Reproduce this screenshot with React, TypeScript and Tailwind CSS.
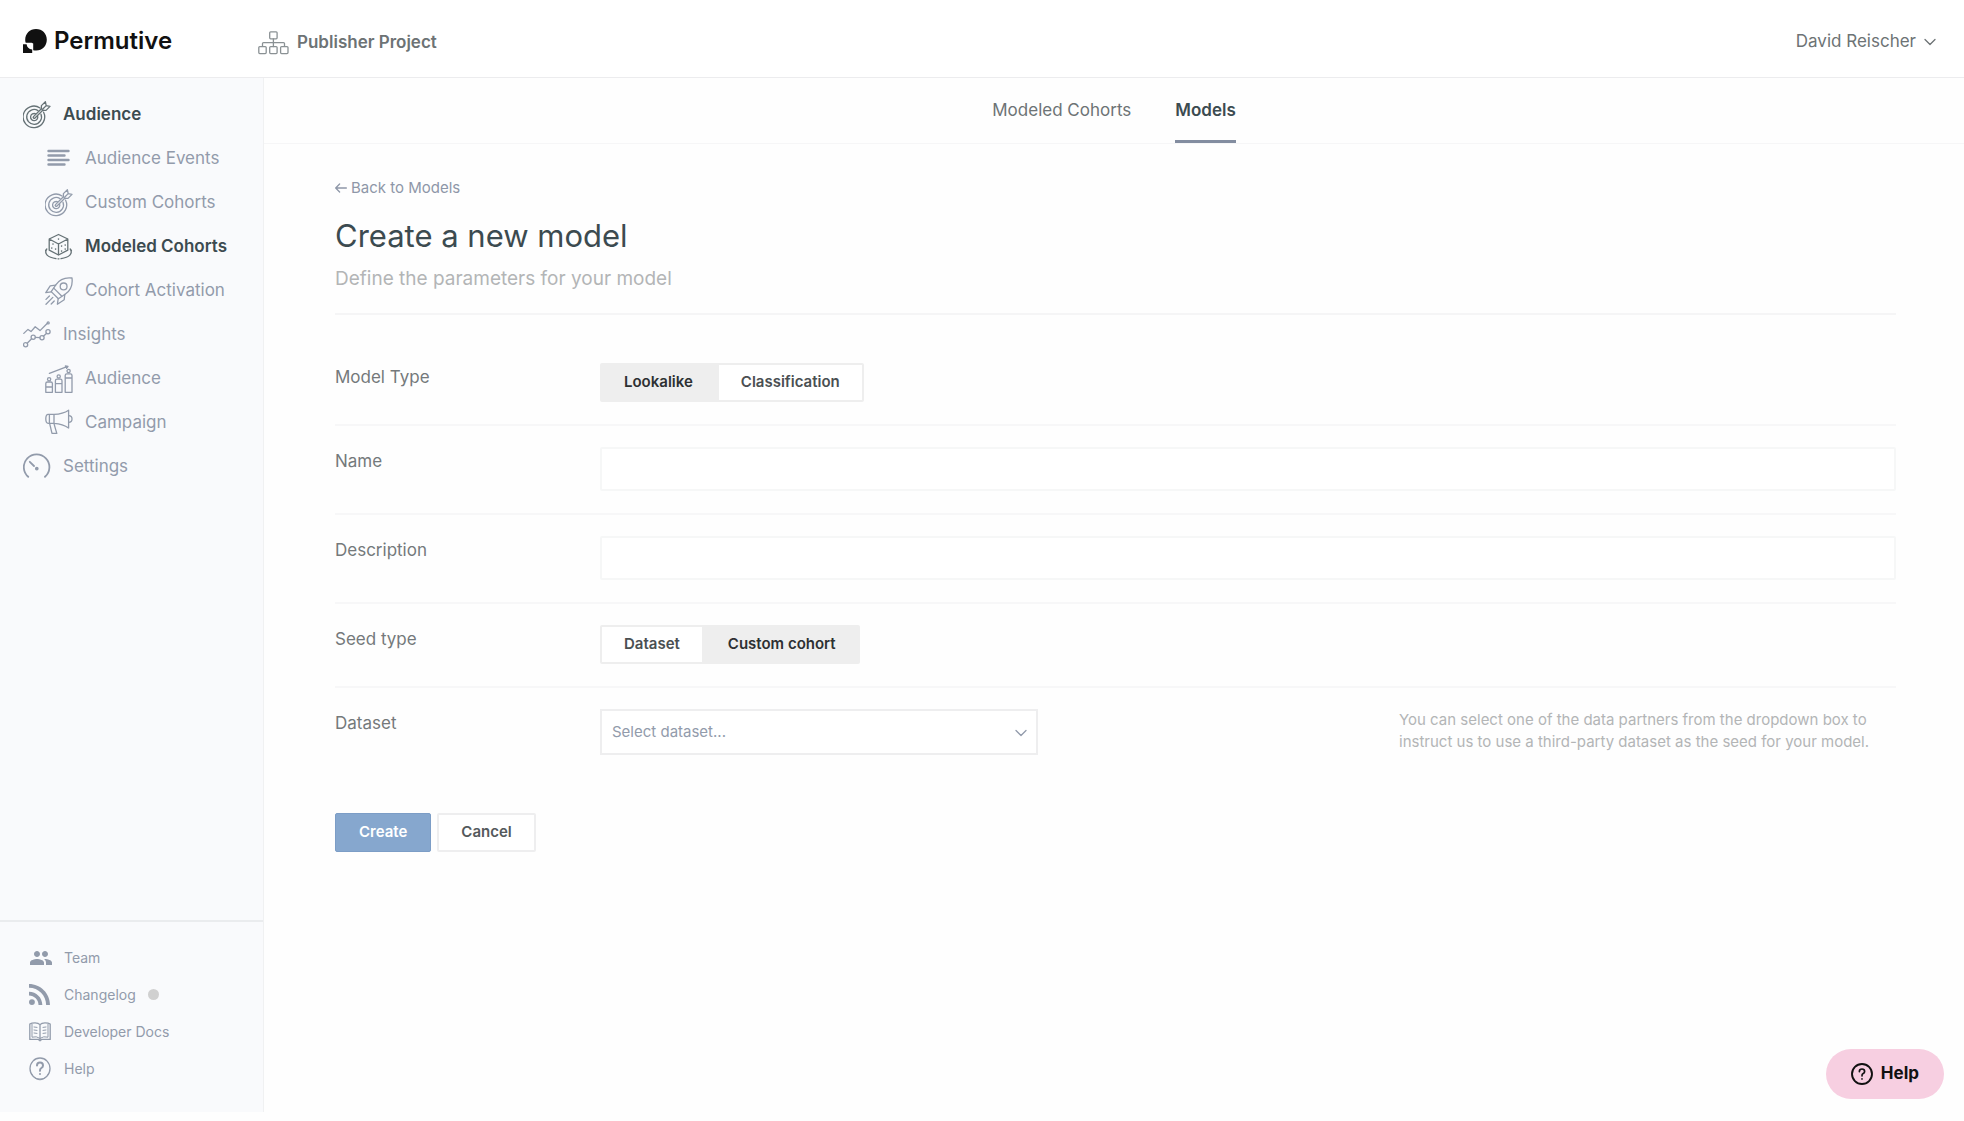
import React, { useState } from "react";
import { MdPeople } from "react-icons/md";

type IconProps = { className?: string; children: React.ReactNode; box?: string };

const Icon = ({ className = "h-7 w-7", box = "0 0 28 28", children }: IconProps) => (
  <svg
    viewBox={box}
    className={`shrink-0 ${className}`}
    fill="none"
    stroke="currentColor"
    strokeWidth="1.3"
    strokeLinecap="round"
    strokeLinejoin="round"
    aria-hidden="true"
  >
    {children}
  </svg>
);

const TargetIcon = () => (
  <Icon>
    <path d="M17 7A10.8 10.8 0 1 0 20.6 11.2" />
    <path d="M15 9.6A7.4 7.4 0 1 0 18 13.2" />
    <path d="M12.6 12.8A3.6 3.6 0 1 0 14.6 15" />
    <path d="M10.5 15.6L18.4 7.8M12 17L19.8 9.2M10.5 15.6a1 1 0 0 0 1.5 1.4" />
    <path d="M18.4 8V4.6L22.4 .8L23.2 4.6L27 5.4L23 9.4H19.4M19.6 8.2L23.2 4.6" />
  </Icon>
);

const LinesIcon = () => (
  <Icon>
    <path strokeWidth="2.4" d="M3.5 6h20M3.5 10.5h16M3.5 15h20M3.5 19.5h16" />
  </Icon>
);

const CubeIcon = () => (
  <Icon>
    <path d="M13.5 1.5L22.8 6v11.2L13.5 22L4.2 17.2V6zM4.2 6l9.3 5l9.3-5M13.5 11v11" />
    <path
      strokeWidth="1.6"
      d="M13.5 6v.1M8 11v.1M10.6 16v.1M6.8 15v.1M16.6 13v.1M20.2 12v.1M16.6 18v.1M20.2 16v.1"
    />
    <path d="M1.6 16.4C-1 20.5 2.5 24.6 11 25.6M25.4 16.4C28 20.5 24.5 24.6 16 25.6M.6 17.4l1.2-1.4M26.4 17.4l-1.2-1.4M13 25.8h1" />
  </Icon>
);

const RocketIcon = () => (
  <Icon>
    <path d="M27 1C20.5.2 14.4 2.6 11 7.6L6.2 14.6L13.4 21.8L20.4 17C25.4 13.6 27.8 7.5 27 1z" />
    <circle cx="18.6" cy="9.4" r="3.4" />
    <path d="M10.6 8.2L5.2 8.8L.8 15.6L6.4 14.8M9 11.4L16.6 19M19.8 17.4L19.2 22.8L12.4 27.2L13.2 21.6" />
    <path d="M4.4 19L1 22.4M7.8 20.4L1 27.2M9.2 24L6.2 27" />
  </Icon>
);

const TrendIcon = () => (
  <Icon>
    <path d="M.8 12.4L5 8.4L8 10.6L12.2 5.8L17 9.6L24.4 2.2" />
    <circle cx="25.2" cy="1.9" r="1" />
    <circle cx="2.6" cy="23.8" r="2.1" />
    <circle cx="10.2" cy="16.2" r="2.1" />
    <circle cx="19" cy="16.8" r="2.1" />
    <circle cx="25" cy="10.8" r="2.1" />
    <path d="M4.2 22.2l4.4-4.4M12.4 16.4l4.4.2M20.4 15.2l3-2.8" />
  </Icon>
);

const PeopleBarsIcon = () => (
  <Icon>
    <path d="M.8 27.3V18.6Q.8 17 2.4 17h3.4q1.6 0 1.6 1.6v8.7zM.8 22h6.6" />
    <path d="M10.4 27.3V15.8q0-1.6 1.6-1.6h3.4q1.6 0 1.6 1.6v11.5zM10.4 18.6H17" />
    <path d="M20.2 27.3V10.4q0-1.6 1.6-1.6h3.6q1.6 0 1.6 1.6v16.9zM20.2 13H27" />
    <circle cx="4.1" cy="14.2" r="1.6" />
    <circle cx="13.7" cy="11.4" r="1.6" />
    <circle cx="23.6" cy="6" r="1.6" />
    <path d="M4.4 8.4L22 1.6M20.4 1L23 1.4L21.6 3.4" />
  </Icon>
);

const MegaphoneIcon = () => (
  <Icon>
    <path d="M9 5.4H3.2Q.8 5.4.8 9.8T3.2 14.4H9zM4.4 5.4v9M9 5.4Q18 5 23.6 1.2V19Q18 15 9 14.4" />
    <path d="M23.6 6.6q3.4 0 3.4 3.4t-3.4 3.4M4.6 14.4L7 24.4h4.8L10.4 19.6L9 14.6" />
  </Icon>
);

const GaugeIcon = () => (
  <Icon>
    <path strokeWidth="1.8" d="M5.2 23.8A12.8 12.8 0 1 1 22 23.8M6.8 8.8l4.2 4.2" />
    <circle cx="13.8" cy="15.6" r="1.2" fill="currentColor" />
  </Icon>
);

const RssIcon = () => (
  <svg viewBox="4 4.4 15.6 15.6" className="h-[21px] w-[21px]" fill="currentColor" aria-hidden="true">
    <circle cx="6.18" cy="17.82" r="2.18" />
    <path d="M4 4.44v2.83c7.03 0 12.73 5.7 12.73 12.73h2.83c0-8.59-6.97-15.56-15.56-15.56zm0 5.66v2.83c3.9 0 7.07 3.17 7.07 7.07h2.83c0-5.47-4.43-9.9-9.9-9.9z" />
  </svg>
);

const BookIcon = () => (
  <Icon className="h-5 w-[22px]" box="0 0 22 20">
    <path d="M11 2.6Q9.4.8 6 .8T.8 2V17.4h8.6L11 18.8l1.6-1.4h8.6V2Q19.4.8 16 .8T11 2.6V18.4" />
    <path
      strokeWidth="1"
      d="M3 2.4v12.8q4.4-1.4 8 1.2q3.6-2.6 8-1.2V2.4M5 5l3 .4M5 8l3 .4M5 11l3 .4M14 5.4l3-.4M14 8.4l3-.4M14 11.4l3-.4"
    />
  </Icon>
);

const HelpOvalIcon = () => (
  <Icon className="h-6 w-[22px]" box="0 0 22 24">
    <ellipse cx="11" cy="11.6" rx="10" ry="10.6" />
    <path d="M2.6 17Q6 22.8 11 22.8T19.4 17" strokeWidth="1" />
    <path strokeWidth="2" d="M8 8.4Q8 5.6 11 5.6T14 8.4Q14 10 12.4 11T11 13.8M11 17v.1" />
  </Icon>
);

const SitemapIcon = () => (
  <Icon className="h-6 w-[31px] text-[#8a9194]" box="0 0 31 24">
    <rect x="11.7" y=".8" width="7.4" height="7" rx="1" />
    <rect x=".8" y="15.6" width="7.4" height="7" rx="1" />
    <rect x="11.7" y="15.6" width="7.4" height="7" rx="1" />
    <rect x="22.6" y="15.6" width="7.4" height="7" rx="1" />
    <path d="M15.4 7.8v7.8M4.5 15.4V12.6q0-1 1-1h20q1 0 1 1v2.8" />
  </Icon>
);

const LogoMark = () => (
  <svg viewBox="0 0 24 24" className="h-6 w-6" fill="#111111" aria-hidden="true">
    <path d="M13 0C19.4 0 23.8 4.6 23.8 10.8S19.2 21.6 13.2 21.6C12 21.6 11 21.5 10.2 21.2V14.4L8.6 13.8H2.7C2.3 12.8 2.2 11.8 2.2 10.8C2.2 4.6 6.8 0 13 0z" />
    <path d="M0 15.2h3.6Q4 19.6 9.2 20.6V24H0z" />
  </svg>
);

const Chevron = ({ className }: { className: string }) => (
  <Icon className={className} box="0 0 12 8">
    <path d="M1 1.5l5 5l5-5" />
  </Icon>
);

const navItems = [
  { label: "Audience", icon: <TargetIcon />, sub: false, active: true },
  { label: "Audience Events", icon: <LinesIcon />, sub: true, active: false },
  { label: "Custom Cohorts", icon: <TargetIcon />, sub: true, active: false },
  { label: "Modeled Cohorts", icon: <CubeIcon />, sub: true, active: true },
  { label: "Cohort Activation", icon: <RocketIcon />, sub: true, active: false },
  { label: "Insights", icon: <TrendIcon />, sub: false, active: false },
  { label: "Audience", icon: <PeopleBarsIcon />, sub: true, active: false },
  { label: "Campaign", icon: <MegaphoneIcon />, sub: true, active: false },
  { label: "Settings", icon: <GaugeIcon />, sub: false, active: false },
];

const footerItems = [
  { label: "Team", icon: <MdPeople className="h-6 w-6" />, dot: false },
  { label: "Changelog", icon: <RssIcon />, dot: true },
  { label: "Developer Docs", icon: <BookIcon />, dot: false },
  { label: "Help", icon: <HelpOvalIcon />, dot: false },
];

const Sidebar = () => (
  <aside className="flex w-[264px] shrink-0 flex-col border-r border-[#f0f1f2] bg-[#f9fafc] text-[#929bab]">
    <nav className="flex flex-col pt-[15px]">
      {navItems.map((item, i) => (
        <a
          key={i}
          href="#"
          className={`flex h-11 items-center gap-3 text-[17px] ${item.sub ? "pl-[45px]" : "pl-[23px]"} ${
            item.active ? "font-semibold text-[#3c4b50]" : ""
          }`}
        >
          <span className={`flex ${item.active ? "text-[#667276]" : ""}`}>{item.icon}</span>
          {item.label}
        </a>
      ))}
    </nav>

    <nav className="mt-auto border-t-2 border-[#eaecee] pt-[17px] pb-[25px] text-sm">
      {footerItems.map((item) => (
        <a key={item.label} href="#" className="flex h-[37px] items-center pl-7">
          <span className="flex w-9 items-center pl-px">{item.icon}</span>
          {item.label}
          {item.dot && <span className="ml-3 h-[11px] w-[11px] rounded-full bg-[#d0d0d0]" />}
        </a>
      ))}
    </nav>
  </aside>
);

type ToggleProps = {
  label: string;
  options: string[];
  value: string;
  onChange: (value: string) => void;
};

const Toggle = ({ label, options, value, onChange }: ToggleProps) => (
  <div role="group" aria-label={label} className="flex">
    {options.map((option) => (
      <button
        key={option}
        type="button"
        aria-pressed={option === value}
        onClick={() => onChange(option)}
        className={`h-[39px] border-2 border-[#eeeeee] px-[22px] text-[15px] font-semibold first:rounded-l-xs last:rounded-r-xs ${
          option === value ? "bg-[#eeeeee] text-[#2d3032]" : "bg-white text-[#4a4f52]"
        }`}
      >
        {option}
      </button>
    ))}
  </div>
);

type RowProps = { label: string; htmlFor?: string; first?: boolean; children: React.ReactNode };

const Row = ({ label, htmlFor, first, children }: RowProps) => (
  <div className={`flex items-start pb-[22px] ${first ? "pt-12" : "border-t-2 border-[#f7f7f8] pt-[21px]"}`}>
    <label htmlFor={htmlFor} className="w-[265px] shrink-0 text-[17px] leading-7 text-[#74797b]">
      {label}
    </label>
    {children}
  </div>
);

const inputStyle = "h-11 min-w-0 flex-1 rounded-xs border-2 border-[#f6f7f7] bg-white px-3 text-[15px] outline-none";

export default function App() {
  const [modelType, setModelType] = useState("Lookalike");
  const [seedType, setSeedType] = useState("Custom cohort");
  const [name, setName] = useState("");
  const [description, setDescription] = useState("");

  return (
    <div className="flex min-h-screen flex-col bg-[#fefefe] pb-[9px] font-['Inter','Liberation_Sans',sans-serif]">
      <header className="flex h-[78px] items-center border-b border-[#ececee] bg-white pt-1 pr-7 pl-[23px]">
        <a href="#" className="flex w-[235px] items-center gap-[7px] text-2xl font-semibold text-[#111111]">
          <LogoMark />
          Permutive
        </a>
        <div className="flex items-center gap-2 pt-1 text-[17px] font-semibold text-[#6d7375]">
          <SitemapIcon />
          Publisher Project
        </div>
        <button type="button" className="ml-auto flex items-center gap-2 pt-0.5 text-[17px] text-[#6d7375]">
          David Reischer
          <Chevron className="h-2 w-3" />
        </button>
      </header>

      <div className="flex flex-1">
        <Sidebar />

        <main className="min-w-0 flex-1">
          <nav className="flex h-[66px] justify-center gap-11 border-b border-[#f6f6f7] text-[17px] leading-6">
            <a href="#" className="pt-5 text-[#6d7375]">
              Modeled Cohorts
            </a>
            <a href="#" className="border-b-3 border-[#838da0] pt-5 font-semibold text-[#3c4b50]">
              Models
            </a>
          </nav>

          <form className="pt-8 pr-[68px] pl-[71px]" onSubmit={(e) => e.preventDefault()}>
            <a href="#" className="flex items-center gap-1 text-[15px] leading-6 text-[#8e97a8]">
              <Icon className="h-3 w-3" box="0 0 12 12">
                <path d="M11.4 6H.8M4.6 2L.7 6l3.9 4" />
              </Icon>
              Back to Models
            </a>
            <h1 className="mt-4 text-[31px] leading-10 text-[#3c4b50]">Create a new model</h1>
            <p className="mt-[9px] border-b-2 border-[#f5f5f6] pb-5 text-[19px] leading-7 text-[#b3b5b6]">
              Define the parameters for your model
            </p>

            <Row label="Model Type" first>
              <Toggle
                label="Model Type"
                options={["Lookalike", "Classification"]}
                value={modelType}
                onChange={setModelType}
              />
            </Row>
            <Row label="Name" htmlFor="name">
              <input id="name" className={inputStyle} value={name} onChange={(e) => setName(e.target.value)} />
            </Row>
            <Row label="Description" htmlFor="description">
              <input
                id="description"
                className={inputStyle}
                value={description}
                onChange={(e) => setDescription(e.target.value)}
              />
            </Row>
            <Row label="Seed type">
              <Toggle
                label="Seed type"
                options={["Dataset", "Custom cohort"]}
                value={seedType}
                onChange={setSeedType}
              />
            </Row>
            <Row label="Dataset" htmlFor="dataset">
              <div className="relative w-[438px]">
                <select
                  id="dataset"
                  className="h-[46px] w-full appearance-none border-2 border-[#eeeeef] bg-white px-[10px] text-[15px] text-[#929bab] outline-none"
                >
                  <option>Select dataset...</option>
                </select>
                <Chevron className="pointer-events-none absolute top-5 right-[11px] h-2 w-3 text-[#929bab]" />
              </div>
              <p className="ml-auto w-[497px] text-[15px] leading-[22px] text-[#b3b5b6]">
                You can select one of the data partners from the dropdown box to instruct us to use a third-party
                dataset as the seed for your model.
              </p>
            </Row>

            <div className="mt-9 flex gap-[6px] text-[15px] font-semibold">
              <button
                type="submit"
                className="h-[39px] rounded-xs border border-[#7c9dc6] bg-[#86a7ce] px-[23px] text-white"
              >
                Create
              </button>
              <button
                type="button"
                className="h-[39px] rounded-xs border-2 border-[#eeeeef] bg-white px-[22px] text-[#54595c]"
              >
                Cancel
              </button>
            </div>
          </form>
        </main>
      </div>

      <button
        type="button"
        className="fixed right-5 bottom-[22px] flex h-[50px] items-center gap-2 rounded-full bg-[#f7cfe1] px-[25px] text-[17px] font-bold text-[#111111]"
      >
        <Icon className="h-[22px] w-[22px]" box="0 0 22 22">
          <circle cx="11" cy="11" r="10" strokeWidth="1.9" />
          <path strokeWidth="1.7" d="M8.4 8.6Q8.4 6 11 6T13.6 8.4Q13.6 9.8 12.2 10.6T11 12.8M11 15.9v.1" />
        </Icon>
        Help
      </button>
    </div>
  );
}
